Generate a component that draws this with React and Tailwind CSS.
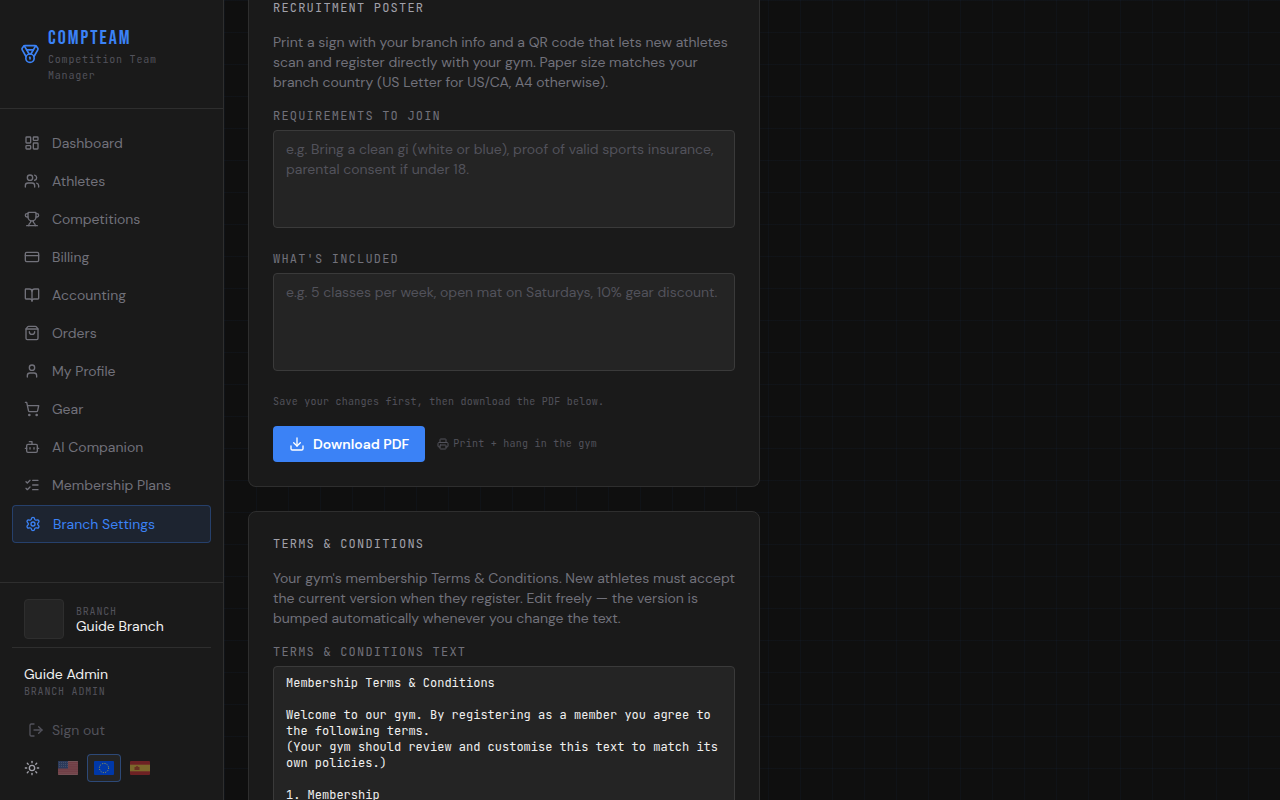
import React, { useState } from 'react';
import {
    LayoutDashboard,
    Users,
    Trophy,
    CreditCard,
    BookOpen,
    ShoppingBag,
    User,
    ShoppingCart,
    Bot,
    ListChecks,
    Settings,
    Medal,
    LogOut,
    Sun,
    Download,
    Printer,
} from 'lucide-react';

const navItems = [
    { label: 'Dashboard', icon: LayoutDashboard },
    { label: 'Athletes', icon: Users },
    { label: 'Competitions', icon: Trophy },
    { label: 'Billing', icon: CreditCard },
    { label: 'Accounting', icon: BookOpen },
    { label: 'Orders', icon: ShoppingBag },
    { label: 'My Profile', icon: User },
    { label: 'Gear', icon: ShoppingCart },
    { label: 'AI Companion', icon: Bot },
    { label: 'Membership Plans', icon: ListChecks },
    { label: 'Branch Settings', icon: Settings },
];

const defaultTerms = `Membership Terms & Conditions

Welcome to our gym. By registering as a member you agree to the following terms.
(Your gym should review and customise this text to match its own policies.)

1. Membership
`;

const mono = "font-['JetBrains_Mono','DejaVu_Sans_Mono',monospace]";

// Flags
const FlagUS = () => (
    <svg width="20" height="14" viewBox="0 0 20 14" aria-hidden="true">
        <rect width="20" height="14" rx="1" fill="#cf7480" />
        <path d="M0 1.5h20M0 3.7h20M0 5.9h20M0 8.1h20M0 10.3h20M0 12.5h20" stroke="#c4606f" strokeWidth="1.1" />
        <path d="M0 .5h20M0 13.2h20" stroke="#d3a3aa" strokeWidth=".6" />
        <rect width="10" height="7.5" fill="#3c5a9c" />
        <path d="M1 1.5h9M1 3.5h9M1 5.5h9" stroke="#8fa2cb" strokeWidth=".6" strokeDasharray="1 1" />
    </svg>
);

const FlagEU = () => (
    <svg width="20" height="14" viewBox="0 0 20 14" aria-hidden="true">
        <rect width="20" height="14" rx="1" fill="#0038a8" />
        <circle cx="10" cy="7" r="4.6" fill="none" stroke="#b3a73c" strokeWidth="1" strokeDasharray="1 1.41" />
    </svg>
);

const FlagES = () => (
    <svg width="20" height="14" viewBox="0 0 20 14" aria-hidden="true">
        <rect width="20" height="14" rx="1" fill="#c0282f" />
        <rect y="3.7" width="20" height="6.6" fill="#dcb53c" />
        <path d="M4.5 6h1l1.5-1.2L8.500 6h1v3h-5z" fill="#b5482a" />
    </svg>
);

const languages = [
    { code: 'en-US', name: 'English (US)', Flag: FlagUS },
    { code: 'en-EU', name: 'English (EU)', Flag: FlagEU },
    { code: 'es', name: 'Español', Flag: FlagES },
];

const Sidebar = () => {
    const [language, setLanguage] = useState('en-EU');

    return (
        <aside className="w-56 shrink-0 flex flex-col bg-[#1a1a1a] border-r border-[#2e2e2e]">
            <div className="flex items-center gap-2 px-5 py-6 border-b border-[#2e2e2e]">
                <Medal size={20} className="shrink-0 text-[#3b82f6]" />
                <div>
                    <div className="font-['Bebas_Neue','Liberation_Sans_Narrow',sans-serif] text-xl leading-7 tracking-widest text-[#3b82f6]">
                        COMPTEAM
                    </div>
                    <p className={`${mono} text-[10px] leading-4 tracking-[0.08em] text-[#52525b]`}>
                        Competition Team Manager
                    </p>
                </div>
            </div>

            <nav className="flex-1 flex flex-col gap-0.5 px-3 py-4">
                {navItems.map(({ label, icon: Icon }) => {
                    const active = label === 'Branch Settings';
                    return (
                        <a
                            key={label}
                            href="#"
                            className={`flex items-center gap-3 px-3 py-2 rounded text-sm ${
                                active
                                    ? 'bg-[#3b82f6]/10 border border-[#3b82f6]/30 text-[#3b82f6]'
                                    : 'text-[#71717a] hover:text-[#d4d4d8]'
                            }`}
                        >
                            <Icon size={16} className="shrink-0" />
                            {label}
                        </a>
                    );
                })}
            </nav>

            <div className="px-3 pt-4 pb-[18px] border-t border-[#2e2e2e]">
                <div className="flex items-center gap-3 px-3 pb-2 border-b border-[#2e2e2e]">
                    <div className="size-10 rounded border border-[#2e2e2e] bg-[#242424]" />
                    <div>
                        <p className={`${mono} text-[10px] leading-[14px] tracking-[0.08em] text-[#52525b]`}>BRANCH</p>
                        <p className="text-sm leading-[14px] text-[#f0f0f0]">Guide Branch</p>
                    </div>
                </div>
                <div className="px-3 pt-4">
                    <p className="text-sm text-[#f0f0f0]">Guide Admin</p>
                    <p className={`${mono} text-[10px] leading-4 tracking-[0.08em] text-[#52525b]`}>BRANCH ADMIN</p>
                </div>
                <button type="button" className="mt-5 flex items-center gap-2 px-4 text-sm text-[#52525b] hover:text-[#d4d4d8]">
                    <LogOut size={16} />
                    Sign out
                </button>
                <div className="mt-3.5 flex items-center gap-[11px] px-3">
                    <button type="button" aria-label="Toggle theme" className="text-[#a1a1aa]">
                        <Sun size={16} />
                    </button>
                    <div className="flex gap-0.5">
                        {languages.map(({ code, name, Flag }) => (
                            <button
                                key={code}
                                type="button"
                                aria-label={name}
                                onClick={() => setLanguage(code)}
                                className={
                                    code === language
                                        ? 'p-1.5 rounded border border-[#3b82f6]/40 bg-[#242424]'
                                        : 'p-1.5 rounded border border-transparent opacity-50'
                                }
                            >
                                <Flag />
                            </button>
                        ))}
                    </div>
                </div>
            </div>
        </aside>
    );
};

// Label + textarea
const Field = ({ id, label, className, ...props }) => (
    <div className="flex flex-col gap-1.5">
        <label htmlFor={id} className={`${mono} text-xs tracking-widest text-[#71717a]`}>
            {label}
        </label>
        <textarea
            id={id}
            className={`block w-full px-3 py-2 rounded border border-[#3a3a3a] bg-[#242424] text-[#f0f0f0] placeholder:text-[#52525b] resize-none focus:outline-none focus:border-[#3b82f6] ${className}`}
            {...props}
        />
    </div>
);

const SectionTitle = ({ children }) => (
    <h2 className={`${mono} text-xs tracking-widest text-[#a1a1aa]`}>{children}</h2>
);

const App = () => {
    const [requirements, setRequirements] = useState('');
    const [included, setIncluded] = useState('');
    const [terms, setTerms] = useState(defaultTerms);

    return (
        <div className="h-screen flex overflow-hidden bg-[#0f0f0f] bg-[linear-gradient(rgba(59,130,246,0.04)_1px,transparent_1px),linear-gradient(90deg,rgba(59,130,246,0.04)_1px,transparent_1px)] bg-[size:32px_32px] font-['DM_Sans',Inter,sans-serif]">
            <Sidebar />

            <main className="flex-1 overflow-y-auto [scrollbar-width:none] px-6 pb-6">
                <div className="max-w-lg flex flex-col gap-6">
                    {/* Recruitment poster */}
                    <section className="flex flex-col gap-4 px-6 pb-6 rounded-b-lg border border-t-0 border-[#2e2e2e] bg-[#1a1a1a]">
                        <SectionTitle>RECRUITMENT POSTER</SectionTitle>
                        <p className="text-sm text-[#71717a]">
                            Print a sign with your branch info and a QR code that lets new athletes scan and register
                            directly with your gym. Paper size matches your branch country (US Letter for US/CA, A4
                            otherwise).
                        </p>
                        <div className="flex flex-col gap-[23px]">
                            <Field
                                id="requirements"
                                label="REQUIREMENTS TO JOIN"
                                rows={4}
                                className="text-sm"
                                placeholder="e.g. Bring a clean gi (white or blue), proof of valid sports insurance, parental consent if under 18."
                                value={requirements}
                                onChange={(e) => setRequirements(e.target.value)}
                            />
                            <Field
                                id="included"
                                label="WHAT'S INCLUDED"
                                rows={4}
                                className="text-sm"
                                placeholder="e.g. 5 classes per week, open mat on Saturdays, 10% gear discount."
                                value={included}
                                onChange={(e) => setIncluded(e.target.value)}
                            />
                            <p className={`${mono} text-[10px] leading-4 tracking-wide text-[#52525b]`}>
                                Save your changes first, then download the PDF below.
                            </p>
                        </div>
                        <div className="flex items-center gap-3">
                            <button
                                type="button"
                                className="flex items-center gap-2 px-4 py-2 rounded bg-[#3b82f6] text-sm font-semibold text-white hover:bg-[#2563eb]"
                            >
                                <Download size={16} />
                                Download PDF
                            </button>
                            <span className={`${mono} flex items-center gap-1 text-[10px] leading-4 tracking-wide text-[#52525b]`}>
                                <Printer size={12} />
                                Print + hang in the gym
                            </span>
                        </div>
                    </section>

                    {/* Terms */}
                    <section className="flex flex-col gap-4 p-6 rounded-lg border border-[#2e2e2e] bg-[#1a1a1a]">
                        <SectionTitle>TERMS &amp; CONDITIONS</SectionTitle>
                        <p className="text-sm text-[#71717a]">
                            Your gym's membership Terms &amp; Conditions. New athletes must accept the current version
                            when they register. Edit freely — the version is bumped automatically whenever you change
                            the text.
                        </p>
                        <Field
                            id="terms"
                            label="TERMS & CONDITIONS TEXT"
                            rows={16}
                            className={`${mono} text-xs`}
                            value={terms}
                            onChange={(e) => setTerms(e.target.value)}
                        />
                    </section>
                </div>
            </main>
        </div>
    );
};

export default App;
